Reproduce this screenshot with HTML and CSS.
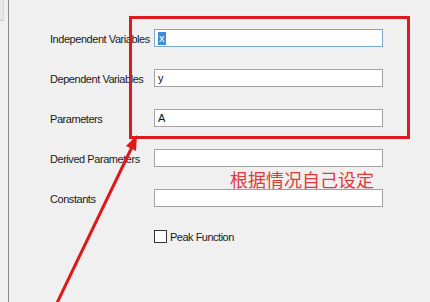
FILE: index.html
```html
<!DOCTYPE html>
<html>
<head>
<meta charset="utf-8">
<link rel="stylesheet" href="styles.css">
</head>
<body>
<div class="page">
  <div class="side"><div class="side-tab"></div></div>
  <div class="form">
    <div class="grid">
      <label class="lbl">Independent Variables</label>
      <div class="field focus"><span class="sel">x</span></div>
      <label class="lbl">Dependent Variables</label>
      <div class="field"><span class="val">y</span></div>
      <label class="lbl">Parameters</label>
      <div class="field"><span class="val">A</span></div>
      <label class="lbl">Derived Parameters</label>
      <div class="field"></div>
      <label class="lbl">Constants</label>
      <div class="field"></div>
      <div></div>
      <div class="check"><span class="box"></span><span class="check-lbl">Peak Function</span></div>
    </div>
  </div>
  <div class="highlight"></div>
  <div class="note">根据情况自己设定</div>
  <svg class="arrow" width="430" height="302" viewBox="0 0 430 302">
    <line x1="56" y1="305" x2="132" y2="147" stroke="#e01818" stroke-width="3"/>
    <polygon points="137,135 136,151 126,146" fill="#e01818"/>
  </svg>
</div>
</body>
</html>
```
FILE: styles.css
```css
html, body {
  margin: 0;
  padding: 0;
  background: #f0f0f0;
}
.page {
  position: relative;
  width: 430px;
  height: 302px;
  overflow: hidden;
  display: flex;
  font-family: "Liberation Sans", Arial, sans-serif;
  font-size: 11px;
  color: #1a1a1a;
}
.side {
  width: 8px;
  border-right: 1px solid #8c8c8c;
  flex: none;
}
.side-tab {
  width: 3px;
  height: 20px;
  border-right: 1px solid #d8d8d8;
  border-bottom: 1px solid #c8c8c8;
  background: #e8e8e8;
}
.form {
  padding: 29px 0 0 41px;
}
.grid {
  display: grid;
  grid-template-columns: 104px 229px;
  grid-auto-rows: 18px;
  row-gap: 22px;
  align-items: center;
}
.lbl {
  white-space: nowrap;
  letter-spacing: -0.45px;
  position: relative;
  top: 1px;
}
.field {
  box-sizing: border-box;
  height: 18px;
  background: #fff;
  border: 1px solid #a3a3a3;
  display: flex;
  align-items: center;
  padding-left: 3px;
  font-size: 11px;
}
.field.focus {
  border-color: #7aa9cf;
}
.sel {
  background: #3c8ce0;
  color: #fff;
  padding: 0 1px;
  line-height: 13px;
}
.val {
  color: #111;
}
.check {
  display: flex;
  align-items: center;
  gap: 3px;
  margin-top: -3px;
}
.check-lbl {
  letter-spacing: -0.5px;
}
.box {
  box-sizing: border-box;
  width: 13px;
  height: 13px;
  border: 1px solid #333;
  background: #fff;
}
.highlight {
  position: absolute;
  left: 129px;
  top: 16px;
  width: 281px;
  height: 123px;
  box-sizing: border-box;
  border: 3px solid #dc1a20;
}
.note {
  position: absolute;
  left: 230px;
  top: 168px;
  font-family: "Noto Sans CJK SC", sans-serif;
  font-size: 18px;
  line-height: 22px;
  color: #e03a3a;
}
.arrow {
  position: absolute;
  left: 0;
  top: 0;
}
```
